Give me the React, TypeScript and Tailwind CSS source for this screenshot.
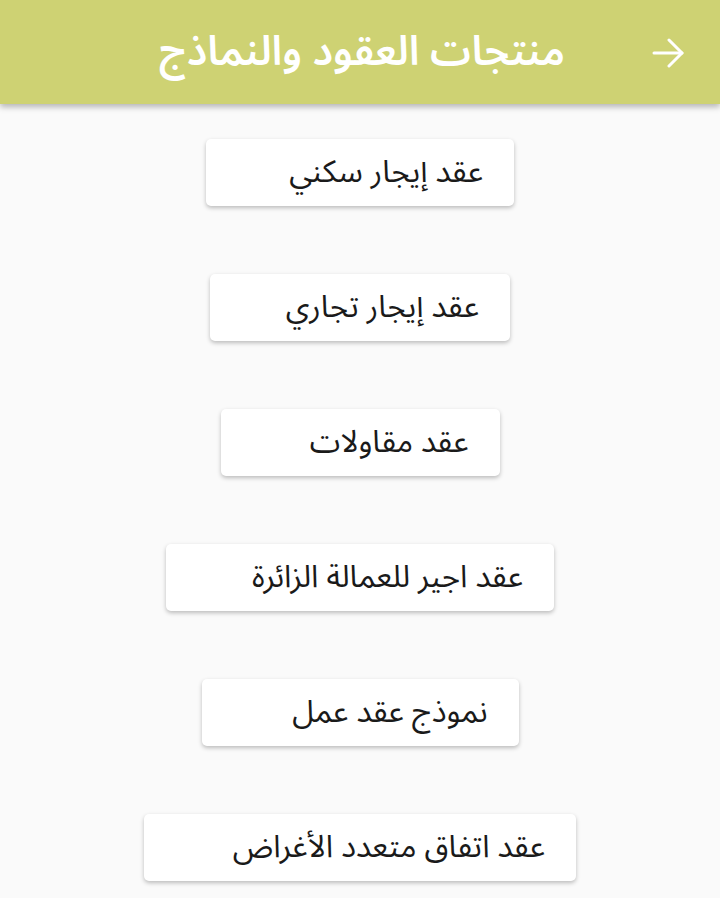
import React from "react";

const items: { label: string; w: string }[] = [
  { label: "عقد إيجار سكني", w: "w-[308px]" },
  { label: "عقد إيجار تجاري", w: "w-[300px]" },
  { label: "عقد مقاولات", w: "w-[279px]" },
  { label: "عقد اجير للعمالة الزائرة", w: "w-[388px]" },
  { label: "نموذج عقد عمل", w: "w-[317px]" },
  { label: "عقد اتفاق متعدد الأغراض", w: "w-[432px]" },
];

export default function App() {
  return (
    <div
      dir="rtl"
      className="w-[720px] h-[898px] overflow-hidden bg-[#fafafa]"
      style={{ fontFamily: '"Noto Sans Arabic", "Noto Sans", "DejaVu Sans", sans-serif' }}
    >
      <header className="relative h-[104px] bg-[#ced273] shadow-[0_3px_6px_rgba(0,0,0,0.28)] flex items-center pr-[155px]">
        <h1 className="text-white text-[41px] font-semibold leading-none">منتجات العقود والنماذج</h1>
        <svg
          className="absolute left-[652px] top-[38px]"
          width="32"
          height="30"
          viewBox="0 0 32 30"
          fill="none"
          stroke="white"
          strokeWidth="3"
          strokeLinecap="round"
          strokeLinejoin="round"
        >
          <path d="M2 15 H30" />
          <path d="M17 2 L30 15 L17 28" />
        </svg>
      </header>
      <main className="flex flex-col items-center gap-[68px] pt-[35px]">
        {items.map((it) => (
          <div
            key={it.label}
            className={`${it.w} h-[67px] bg-white rounded-[5px] shadow-[0_2px_4px_rgba(0,0,0,0.25)] flex items-center pr-[31px] text-[31px] text-[#1a1a1a]`}
          >
            {it.label}
          </div>
        ))}
      </main>
    </div>
  );
}
